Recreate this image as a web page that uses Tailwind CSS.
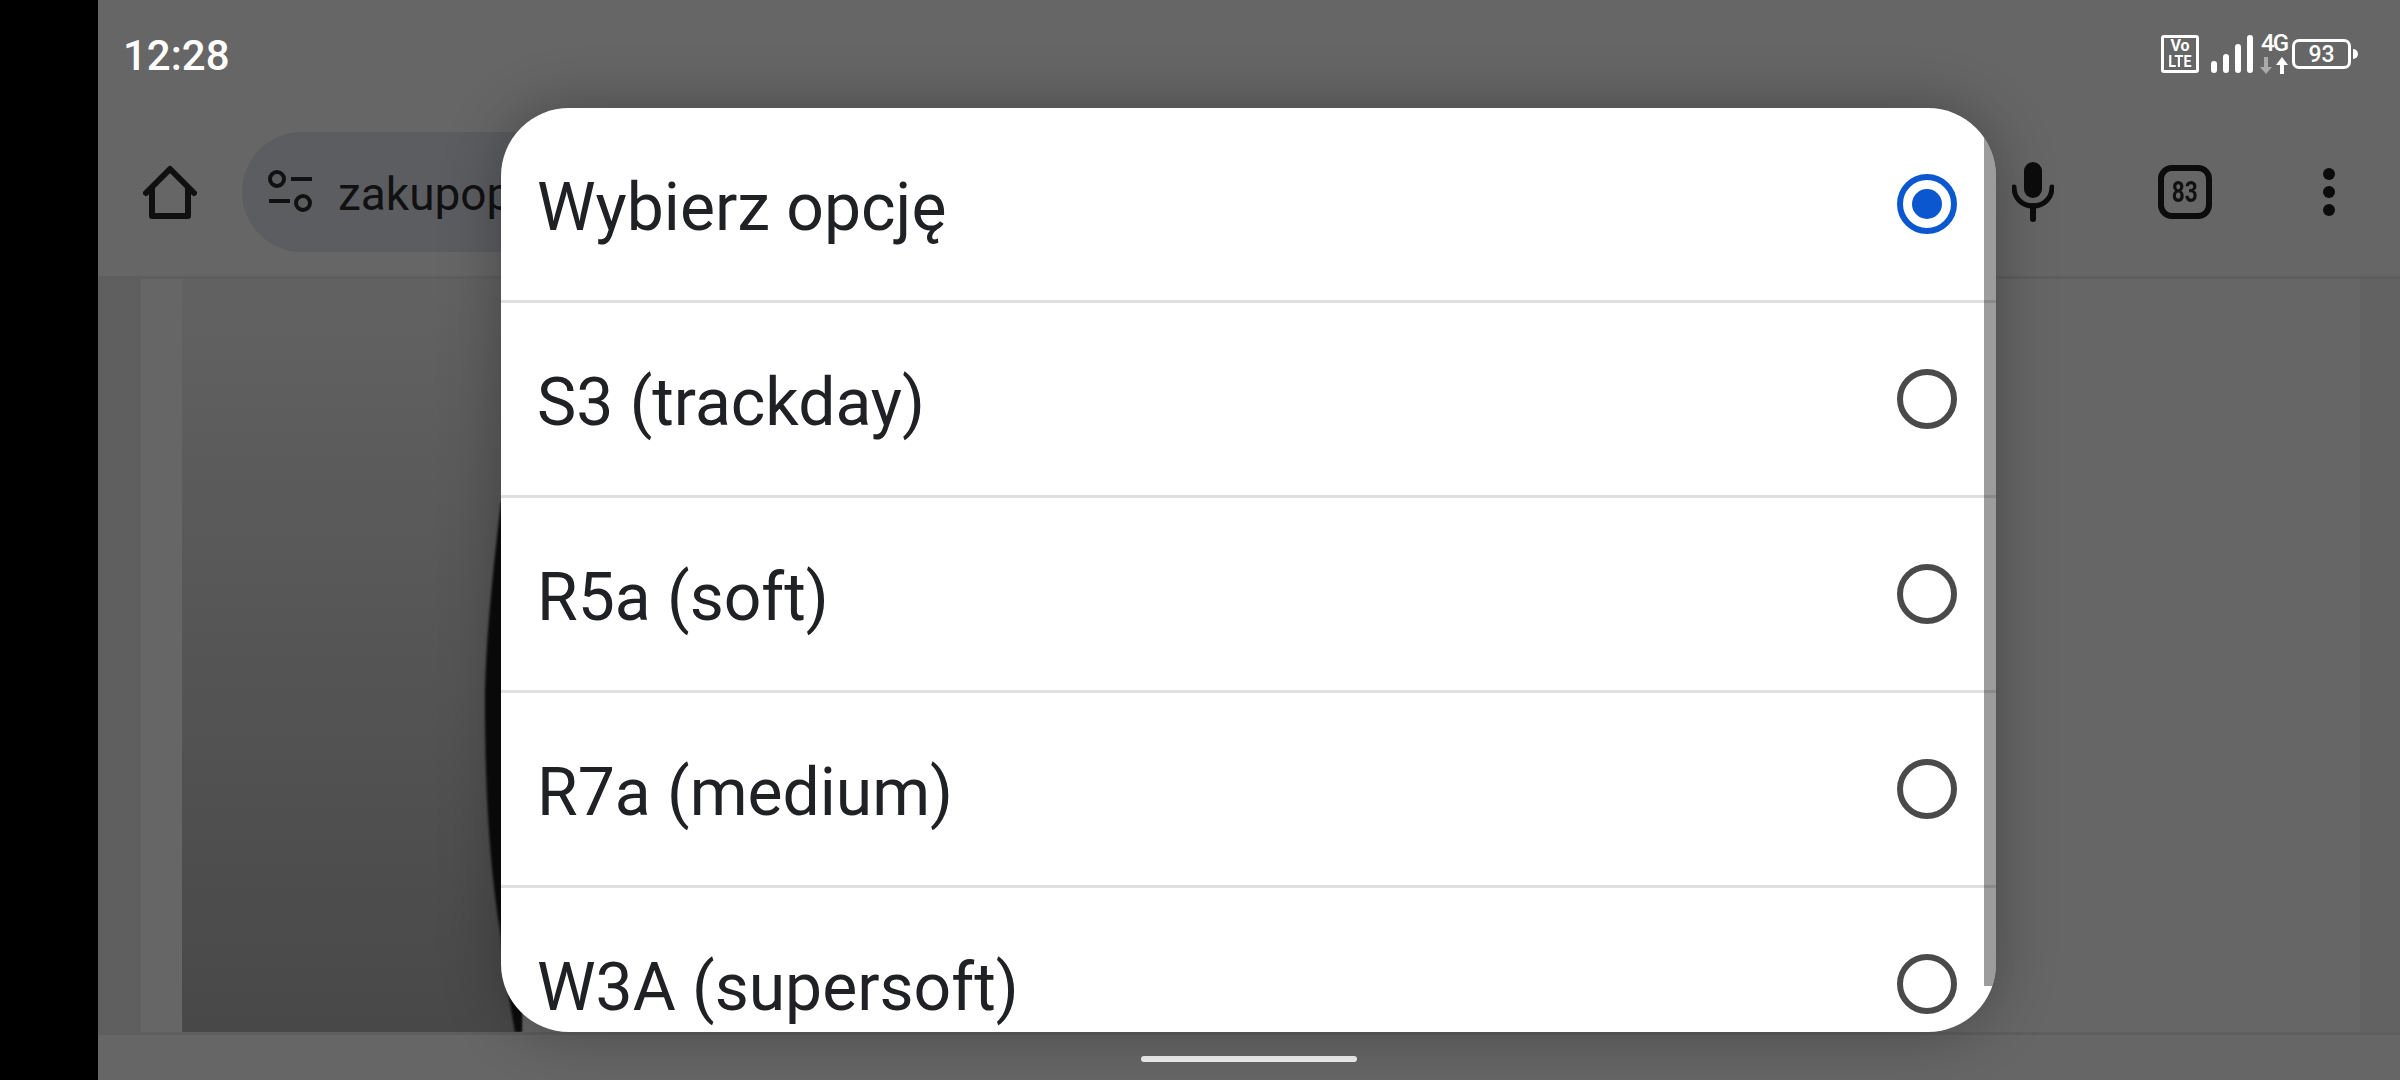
<!DOCTYPE html>
<html lang="pl">
<head>
<meta charset="UTF-8">
<title>Wybierz opcję</title>
<script src="https://cdn.jsdelivr.net/npm/@tailwindcss/browser@4"></script>
</head>
<body class="bg-black font-['Roboto',sans-serif]">
<div class="relative w-[2400px] h-[1080px] overflow-hidden bg-black pl-[98px]">
  <div class="relative flex flex-col w-[2302px] h-[1080px] bg-[#666666]">

    <!-- status bar -->
    <div class="flex items-center justify-between h-[108px] pl-[25px] pr-[42px]">
      <span class="mt-[3px] text-[42px] font-medium leading-none text-white">12:28</span>
      <div class="flex items-center h-[44px]">
        <div class="flex flex-col items-center justify-center w-[38px] h-[38px] border-[3px] border-white rounded-[3px] text-white font-bold text-[16px] leading-[16px]">
          <span>Vo</span><span class="scale-x-[.9]">LTE</span>
        </div>
        <svg class="ml-[12px]" width="42" height="38" viewBox="0 0 42 38" fill="#fff">
          <rect x="0" y="26" width="6" height="12" rx="3"/><rect x="12" y="19" width="6" height="19" rx="3"/><rect x="24" y="9" width="6" height="29" rx="3"/><rect x="36" y="0" width="6" height="38" rx="3"/>
        </svg>
        <div class="flex flex-col items-center ml-[7px] w-[28px] text-white">
          <span class="mt-[-2px] text-[24px] font-medium leading-[20px] tracking-[-2px]">4G</span>
          <svg class="mt-[4px]" width="28" height="17" viewBox="0 0 28 17"><path d="M0 10h12l-6 7zM4 0h4v11H4z" fill="#aaa"/><path d="M22 0l6 8h-4v9h-4V8h-4z" fill="#fff"/></svg>
        </div>
        <div class="flex items-center justify-center ml-[4px] w-[59px] h-[30px] border-[3px] border-white rounded-[7px] text-white text-[23px] font-medium leading-none">93</div>
        <div class="ml-[2px] w-[5px] h-[10px] bg-white rounded-r-full"></div>
      </div>
    </div>

    <!-- toolbar -->
    <div class="flex items-center h-[171px] border-b-[3px] border-[#5e5e5e]">
      <svg class="ml-[45px]" width="54" height="54" viewBox="0 0 54 54" fill="none" stroke="#101010" stroke-width="6" stroke-linejoin="round" stroke-linecap="round"><path d="M3 28 27 4l24 24"/><path d="M9 24v27h36V24"/></svg>
      <div class="flex items-center ml-[45px] w-[600px] h-[120px] rounded-l-full bg-[#5c5d61] pl-[25px]">
        <svg width="46" height="44" viewBox="0 0 46 44" fill="none" stroke="#111" stroke-width="4"><circle cx="10" cy="9" r="7"/><path d="M24 9h21M2 31h21"/><circle cx="36" cy="33" r="7"/></svg>
        <span class="mt-[3px] ml-[25px] text-[46px] leading-none text-[#111]">zakupop</span>
      </div>
      <div class="ml-auto flex items-center">
        <svg width="42" height="60" viewBox="0 0 42 60"><rect x="12" y="0" width="18" height="36" rx="9" fill="#0c0c0c"/><path d="M2 25c0 11 8 19 19 19s19-8 19-19" fill="none" stroke="#0c0c0c" stroke-width="5" stroke-linecap="round"/><path d="M21 44v13" stroke="#0c0c0c" stroke-width="6" stroke-linecap="round"/></svg>
        <div class="flex items-center justify-center ml-[104px] w-[54px] h-[54px] border-[6px] border-[#0c0c0c] rounded-[14px] text-[#111] text-[29px] font-bold leading-none">
          <span class="scale-x-[.78]">83</span>
        </div>
        <div class="flex flex-col ml-[111px] mr-[65px] gap-[6px]">
          <span class="w-[12px] h-[12px] rounded-full bg-[#0c0c0c]"></span>
          <span class="w-[12px] h-[12px] rounded-full bg-[#0c0c0c]"></span>
          <span class="w-[12px] h-[12px] rounded-full bg-[#0c0c0c]"></span>
        </div>
      </div>
    </div>

    <!-- page behind the dialog -->
    <div class="flex h-[753px]">
      <div class="w-[43px] bg-[#5f5f5f]"></div>
      <div class="w-[41px] bg-[#666666]"></div>
      <div class="relative w-[340px] bg-gradient-to-b from-[#626262] to-[#484848]">
        <svg class="absolute left-[290px] top-[190px] blur-[1px]" width="50" height="563" viewBox="0 0 50 563"><path d="M29 33C20 110 13 180 13 237 13 320 18 400 28 461 32 500 38 535 43 563H50V33z" fill="#0b0b0b"/></svg>
      </div>
      <div class="flex-1"></div>
      <div class="w-[40px] bg-[#626262]"></div>
    </div>

    <!-- bottom bar -->
    <div class="relative flex-1 border-t-[3px] border-[#5e5e5e]">
      <div class="absolute left-[1043px] top-[21px] w-[216px] h-[6px] rounded-full bg-[#f0f0f0]"></div>
    </div>

    <!-- dialog -->
    <div class="absolute left-[403px] top-[108px] w-[1495px] h-[924px] overflow-hidden rounded-[68px] bg-white shadow-[0_0_60px_rgba(0,0,0,0.3)]">
      <div class="flex items-center justify-between h-[195px] pl-[36px] pr-[39px] border-b-[3px] border-[#e0e0e0]">
        <span class="mt-[7px] text-[66px] leading-none text-[#202124]">Wybierz opcję</span>
        <span class="flex items-center justify-center w-[60px] h-[60px] rounded-full border-[6px] border-[#0b57d0]"><span class="w-[30px] h-[30px] rounded-full bg-[#0b57d0]"></span></span>
      </div>
      <div class="flex items-center justify-between h-[195px] pl-[36px] pr-[39px] border-b-[3px] border-[#e0e0e0]">
        <span class="mt-[7px] text-[66px] leading-none text-[#202124]">S3 (trackday)</span>
        <span class="w-[60px] h-[60px] rounded-full border-[6px] border-[#4a4a4a]"></span>
      </div>
      <div class="flex items-center justify-between h-[195px] pl-[36px] pr-[39px] border-b-[3px] border-[#e0e0e0]">
        <span class="mt-[7px] text-[66px] leading-none text-[#202124]">R5a (soft)</span>
        <span class="w-[60px] h-[60px] rounded-full border-[6px] border-[#4a4a4a]"></span>
      </div>
      <div class="flex items-center justify-between h-[195px] pl-[36px] pr-[39px] border-b-[3px] border-[#e0e0e0]">
        <span class="mt-[7px] text-[66px] leading-none text-[#202124]">R7a (medium)</span>
        <span class="w-[60px] h-[60px] rounded-full border-[6px] border-[#4a4a4a]"></span>
      </div>
      <div class="flex items-center justify-between h-[195px] pb-[3px] pl-[36px] pr-[39px]">
        <span class="mt-[7px] text-[66px] leading-none text-[#202124]">W3A (supersoft)</span>
        <span class="w-[60px] h-[60px] rounded-full border-[6px] border-[#4a4a4a]"></span>
      </div>
      <!-- scrollbar -->
      <div class="absolute right-0 top-0 w-[12px] h-[878px] bg-black/[0.39]"></div>
    </div>
  </div>
</div>
</body>
</html>
